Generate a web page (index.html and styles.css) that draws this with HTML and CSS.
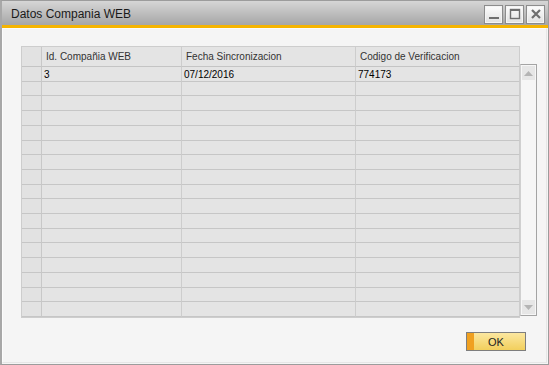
FILE: index.html
```html
<!DOCTYPE html>
<html>
<head>
    <title>Datos Compania WEB</title>
    <link rel="stylesheet" href="styles.css">
</head>
<body>
    <div class="window">
        <div class="titlebar">
            <span class="title">Datos Compania WEB</span>
            <div class="controls">
                <div class="ctl"><svg width="12" height="12" viewBox="0 0 12 12"><rect x="1" y="9" width="10" height="2" fill="#6e6e6e"/></svg></div>
                <div class="ctl"><svg width="12" height="12" viewBox="0 0 12 12"><rect x="1.5" y="1.5" width="9" height="9" fill="none" stroke="#6e6e6e" stroke-width="1.4"/><rect x="1" y="1" width="10" height="2" fill="#6e6e6e"/></svg></div>
                <div class="ctl"><svg width="12" height="12" viewBox="0 0 12 12"><path d="M2 2 L10 10 M10 2 L2 10" stroke="#6e6e6e" stroke-width="2.2"/></svg></div>
            </div>
        </div>
        <div class="content">
            <div class="grid-area">
                <div class="grid">
                    <div class="hcell rn"></div>
                    <div class="hcell">Id. Compañia WEB</div>
                    <div class="hcell">Fecha Sincronizacion</div>
                    <div class="hcell">Codigo de Verificacion</div>
                    <div class="rows" id="rows">
                        <div class="cell rn"></div>
                        <div class="cell">3</div>
                        <div class="cell">07/12/2016</div>
                        <div class="cell">774173</div>
                    </div>
                </div>
                <div class="scrollbar">
                    <div class="arrow"><svg width="9" height="5" viewBox="0 0 9 5"><path d="M0 5 L4.5 0 L9 5 Z" fill="#b4b4b4"/></svg></div>
                    <div class="arrow"><svg width="9" height="5" viewBox="0 0 9 5"><path d="M0 0 L4.5 5 L9 0 Z" fill="#b4b4b4"/></svg></div>
                </div>
            </div>
            <div class="footer">
                <button class="ok">OK</button>
            </div>
        </div>
    </div>
    <script>
        var rows = document.getElementById('rows');
        for (var i = 0; i < 16; i++) {
            rows.insertAdjacentHTML('beforeend',
                '<div class="cell rn"></div><div class="cell"></div><div class="cell"></div><div class="cell"></div>');
        }
    </script>
</body>
</html>
```

FILE: styles.css
```css
body { margin: 0; font-family: "Liberation Sans", Arial, sans-serif; background: #fff; }
.window { width: 549px; height: 365px; box-sizing: border-box; border: 1px solid #9c9c9c; border-left: 2px solid #a8a8a8; background: #f5f5f5; display: flex; flex-direction: column; }
.titlebar { height: 24px; background: linear-gradient(#d6d6d6, #a6a6a6); border-bottom: 3px solid #f5b400; display: flex; align-items: center; justify-content: space-between; padding: 0 4px 0 9px; }
.title { font-size: 12px; color: #1a1a1a; margin-top: 1px; }
.controls { display: flex; gap: 4px; margin-top: 2px; }
.ctl { width: 15px; height: 15px; border: 1px solid #f4f4f4; outline: 1px solid #8c8c8c; background: linear-gradient(#fbfbfb, #e2e2e2); display: flex; align-items: center; justify-content: center; }
.content { flex: 1; display: flex; flex-direction: column; border: 1px solid #fcfcfc; border-right-color: #e6e6e6; border-bottom-color: #e6e6e6; margin: 0 1px 1px 0; padding: 17px 0 0 18px; }
.grid-area { display: flex; align-items: flex-start; }
.grid { display: grid; grid-template-columns: 20px 140px 174px 164px; grid-template-rows: 20px 250px; border: 1px solid #cdcdcd; border-right: none; background: #e4e4e4; }
.hcell { font-size: 10px; color: #333; padding: 4px 0 0 4px; border-right: 1px solid #cdcdcd; border-bottom: 1px solid #c4c4c4; overflow: hidden; white-space: nowrap; }
.rows { grid-column: 1 / 5; display: grid; grid-template-columns: 20px 140px 174px 164px; grid-auto-rows: 1fr; }
.cell { font-size: 10px; color: #000; padding: 2px 0 0 2px; border-right: 1px solid #cdcdcd; border-bottom: 1px solid #c6c6c6; white-space: nowrap; }
.rn { background: #e2e2e2; border-right-color: #c8c8c8; }
.scrollbar { width: 15px; height: 250px; margin-top: 18px; border: 1px solid #a4a4a4; border-left-color: #d0d0d0; background: #f6f6f6; display: flex; flex-direction: column; justify-content: space-between; }
.arrow { height: 14px; margin: 1px 1px; background: #e6e6e6; display: flex; align-items: center; justify-content: center; }
.footer { display: flex; justify-content: flex-end; padding: 14px 20px 0 0; }
.ok { width: 60px; height: 19px; border: 1px solid #7e7e7e; font-family: "Liberation Sans", Arial, sans-serif; font-size: 11px; color: #222; padding: 0; background: linear-gradient(to right, #f0a020 0, #f0a020 7px, transparent 7px), linear-gradient(#fbe7a0, #f2cf5c); }
```
